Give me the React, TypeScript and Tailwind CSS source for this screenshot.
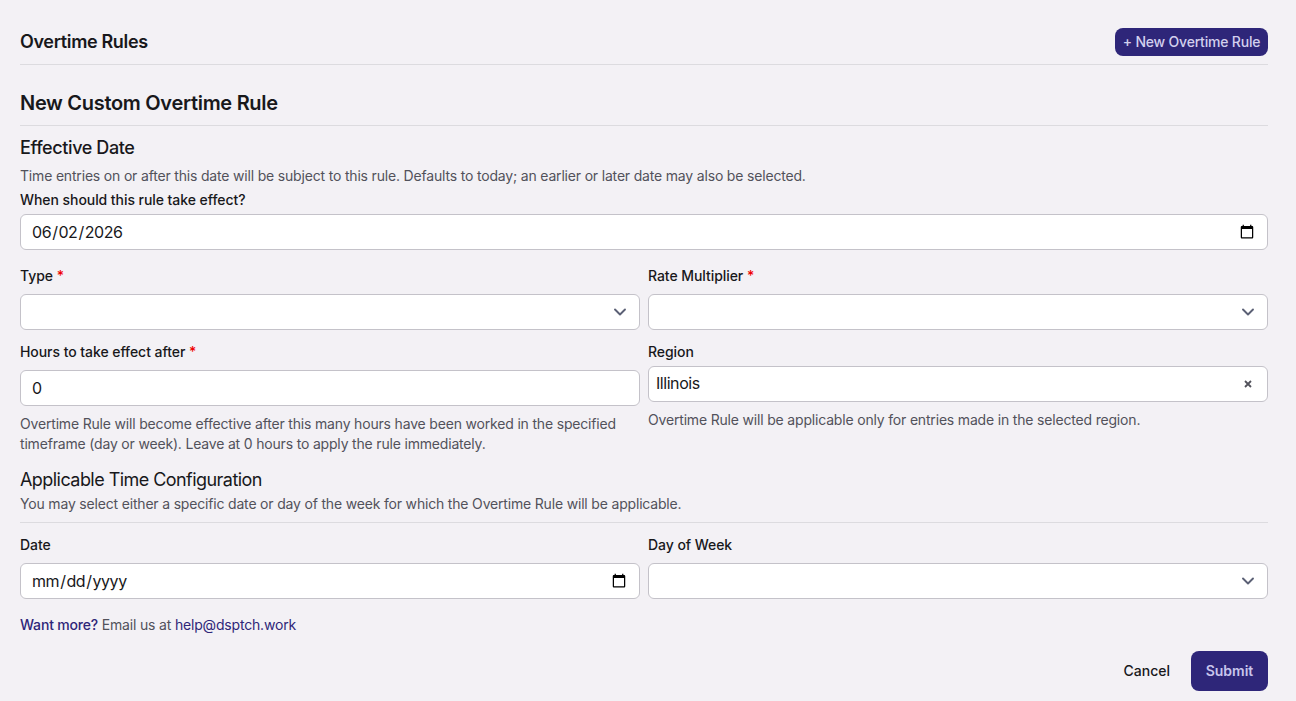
const inputClass =
  "block w-full h-9 rounded-md border border-[#c4c2c9] bg-white text-base tracking-[-0.45px] text-[#18181b] outline-none";

const helpClass = "text-sm leading-5 tracking-[-0.18px] text-[#52525b]";

function Label({ text, required }: { text: string; required?: boolean }) {
  return (
    <label className="block text-sm leading-5 font-medium tracking-[-0.06px] text-[#18181b]">
      {text}
      {required && <span className="text-[#ef0000]"> *</span>}
    </label>
  );
}

function Chevron() {
  return (
    <svg
      className="pointer-events-none absolute right-[13px] top-[11px] h-[14px] w-[14px]"
      viewBox="0 0 14 14"
      fill="none"
      stroke="#5b6075"
      strokeWidth="1.9"
      strokeLinecap="round"
      strokeLinejoin="round"
    >
      <path d="M2 4.5 7 9.5 12 4.5" />
    </svg>
  );
}

function SelectBox() {
  return (
    <div className="relative">
      <select className={`${inputClass} appearance-none px-[10px]`} defaultValue="">
        <option value=""></option>
      </select>
      <Chevron />
    </div>
  );
}

export default function App() {
  return (
    <div className="min-h-[701px] bg-[#f3f1f5] pl-5 pr-7 pt-7 font-['Inter',sans-serif] text-[#18181b]">
      <div className="flex items-center justify-between border-b border-[#dcdbdf] pb-2">
        <h1 className="text-lg leading-7 font-semibold tracking-[-0.35px]">Overtime Rules</h1>
        <button className="h-7 w-[153px] rounded-lg bg-[#2e2679] text-sm font-medium tracking-[-0.2px] text-[#d3d0ee]">
          + New Overtime Rule
        </button>
      </div>

      <h2 className="mt-6 border-b border-[#dcdbdf] pb-2 text-xl leading-7 font-semibold tracking-[-0.3px]">
        New Custom Overtime Rule
      </h2>

      <h3 className="mt-2.5 text-lg leading-6 font-medium tracking-[-0.4px]">Effective Date</h3>
      <p className={`mt-1.5 ${helpClass}`}>
        Time entries on or after this date will be subject to this rule. Defaults to today; an
        earlier or later date may also be selected.
      </p>
      <div className="mt-1">
        <Label text="When should this rule take effect?" />
        <input type="date" defaultValue="2026-06-02" className={`${inputClass} mt-1 px-[10px]`} />
      </div>

      <div className="mt-4 grid grid-cols-2 gap-x-2">
        <div>
          <Label text="Type" required />
          <div className="mt-2">
            <SelectBox />
          </div>
        </div>
        <div>
          <Label text="Rate Multiplier" required />
          <div className="mt-2">
            <SelectBox />
          </div>
        </div>
      </div>

      <div className="mt-3 grid grid-cols-2 gap-x-2">
        <div>
          <Label text="Hours to take effect after" required />
          <input type="number" defaultValue={0} className={`${inputClass} mt-2 h-[36px] px-[11px]`} />
          <p className={`mt-2 pr-4 ${helpClass}`}>
            Overtime Rule will become effective after this many hours have been worked in the
            specified timeframe (day or week). Leave at 0 hours to apply the rule immediately.
          </p>
        </div>
        <div>
          <Label text="Region" />
          <div className="relative mt-1">
            <input type="text" defaultValue="Illinois" className={`${inputClass} px-[7px] pb-[2px]`} />
            <svg
              className="absolute right-4 top-[14px] h-2 w-2"
              viewBox="0 0 8 8"
              fill="none"
              stroke="#52525b"
              strokeWidth="1.8"
            >
              <path d="M1 1 7 7M7 1 1 7" />
            </svg>
          </div>
          <p className={`mt-2 ${helpClass}`}>
            Overtime Rule will be applicable only for entries made in the selected region.
          </p>
        </div>
      </div>

      <h3 className="mt-3.5 text-lg leading-6 font-normal tracking-[-0.55px]">
        Applicable Time Configuration
      </h3>
      <p className={`border-b border-[#dcdbdf] pt-[2px] pb-2 ${helpClass}`}>
        You may select either a specific date or day of the week for which the Overtime Rule will
        be applicable.
      </p>

      <div className="mt-3 grid grid-cols-2 gap-x-2">
        <div>
          <Label text="Date" />
          <input type="date" className={`${inputClass} mt-2 px-[10px]`} />
        </div>
        <div>
          <Label text="Day of Week" />
          <div className="mt-2">
            <SelectBox />
          </div>
        </div>
      </div>

      <p className={`mt-4 ${helpClass}`}>
        <a className="font-medium text-[#2e2679]">Want more?</a> Email us at{" "}
        <a className="text-[#2e2679]">help@dsptch.work</a>
      </p>

      <div className="mt-4 flex items-center justify-end gap-[21px]">
        <button className="text-sm font-medium text-[#18181b]">Cancel</button>
        <button className="h-10 w-[77px] rounded-lg bg-[#2e2679] text-sm font-semibold text-[#c8c5ec]">
          Submit
        </button>
      </div>
    </div>
  );
}
